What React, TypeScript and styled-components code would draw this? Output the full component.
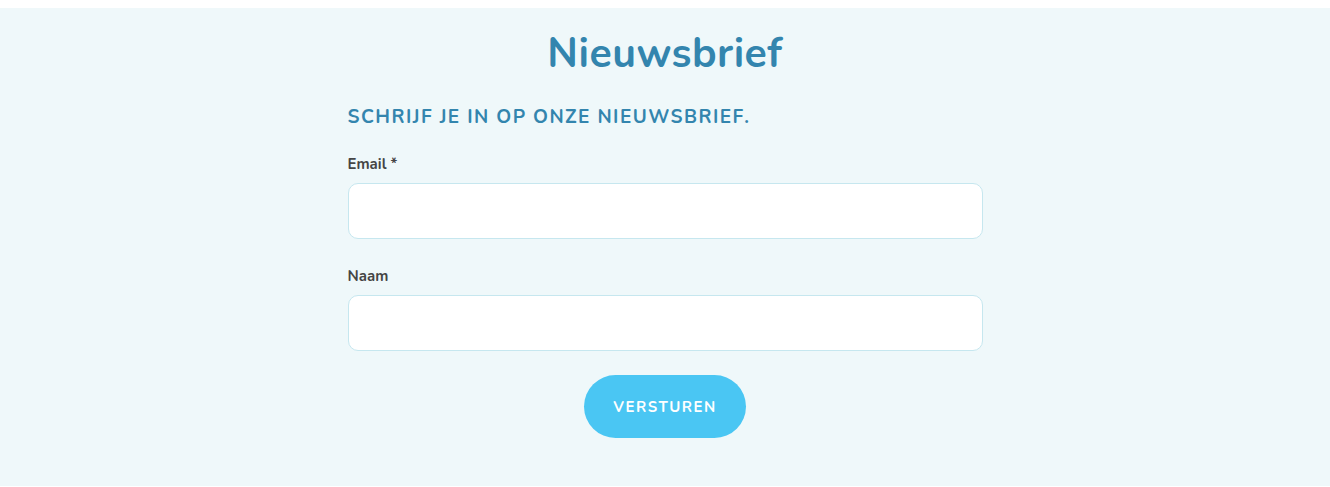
import React from "react";
import styled, { createGlobalStyle } from "styled-components";

const GlobalStyle = createGlobalStyle`
  body {
    margin: 0;
    background: #ffffff;
    font-family: "Nunito", "Lato", "Noto Sans", sans-serif;
  }
`;

const App = () => {
  return (
    <>
      <GlobalStyle />
      <Section>
        <Title>Nieuwsbrief</Title>
        <Form onSubmit={(e) => e.preventDefault()}>
          <Subtitle>Schrijf je in op onze nieuwsbrief.</Subtitle>
          <Field>
            <Label htmlFor="email">Email *</Label>
            <Input id="email" type="email" />
          </Field>
          <Field>
            <Label htmlFor="naam">Naam</Label>
            <Input id="naam" type="text" />
          </Field>
          <ButtonRow>
            <SubmitButton type="submit">Versturen</SubmitButton>
          </ButtonRow>
        </Form>
      </Section>
    </>
  );
};

export default App;

const Section = styled.section`
  margin-top: 8px;
  height: 478px;
  box-sizing: border-box;
  background: #eff8fa;
  padding-top: 20px;
  display: flex;
  flex-direction: column;
  align-items: center;
`;
const Title = styled.h2`
  margin: 0;
  font-size: 41px;
  line-height: 52px;
  font-weight: 700;
  color: #3385ae;
  letter-spacing: 0.5px;
`;
const Form = styled.form`
  width: 635px;
  margin-top: 24px;
  display: flex;
  flex-direction: column;
`;
const Subtitle = styled.h3`
  margin: 0 0 24px;
  font-size: 19px;
  line-height: 26px;
  font-weight: 700;
  text-transform: uppercase;
  letter-spacing: 1.45px;
  color: #3385ae;
`;
const Field = styled.div`
  display: flex;
  flex-direction: column;
  margin-bottom: 24px;

  & + & {
    margin-top: 3px;
  }
`;
const Label = styled.label`
  font-size: 15px;
  line-height: 20px;
  font-weight: 700;
  color: #454545;
  margin-bottom: 9px;
`;
const Input = styled.input`
  height: 56px;
  box-sizing: border-box;
  border: 1px solid #c6e7ef;
  border-radius: 10px;
  background: #ffffff;
  padding: 0 16px;
  font-size: 16px;
  outline: none;
`;
const ButtonRow = styled.div`
  display: flex;
  justify-content: center;
`;
const SubmitButton = styled.button`
  width: 162px;
  height: 63px;
  border: none;
  border-radius: 32px;
  background: #4ac6f3;
  color: #ffffff;
  font-family: inherit;
  font-size: 15px;
  font-weight: 700;
  letter-spacing: 1.5px;
  text-transform: uppercase;
  cursor: pointer;
`;
